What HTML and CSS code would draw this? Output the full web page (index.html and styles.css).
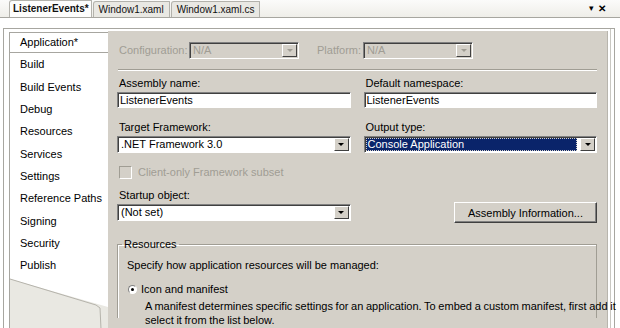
FILE: index.html
```html
<!DOCTYPE html>
<html lang="en">
<head>
<meta charset="UTF-8" />
<title>ListenerEvents - Project Properties</title>
<link rel="stylesheet" href="styles.css">
</head>
<body>

<!-- document tabs -->
<div class="tabstrip">
  <div class="tab active">ListenerEvents*</div>
  <div class="tab">Window1.xaml</div>
  <div class="tab">Window1.xaml.cs</div>
  <div class="tab-tools"><span class="tool-arrow">&#9662;</span><span class="tool-close">&#10005;</span></div>
</div>

<div class="frame">
  <!-- property page list -->
  <div class="sidebar">
    <ul class="page-list">
      <li class="current">Application*</li>
      <li>Build</li>
      <li>Build Events</li>
      <li>Debug</li>
      <li>Resources</li>
      <li>Services</li>
      <li>Settings</li>
      <li>Reference Paths</li>
      <li>Signing</li>
      <li>Security</li>
      <li>Publish</li>
    </ul>
    <svg class="side-tail" width="98" height="52" viewBox="0 0 98 52">
      <polygon points="0,0 98,0 98,30 0,2" fill="#fff" />
      <polyline points="0,2 86,28 90,31 91,52" fill="none" stroke="#b5b3ab" stroke-width="1" />
    </svg>
  </div>

  <!-- application page -->
  <div class="panel">
    <div class="config-row">
      <span class="dim-label cfg-label">Configuration:</span>
      <div class="combo disabled cfg"><span class="combo-text">N/A</span><span class="combo-btn"><i class="tri"></i></span></div>
      <span class="dim-label plat">Platform:</span>
      <div class="combo disabled cfg"><span class="combo-text">N/A</span><span class="combo-btn"><i class="tri"></i></span></div>
    </div>
    <div class="etched"></div>

    <div class="fields">
      <div class="field">
        <label>Assembly name:</label>
        <div class="textbox">ListenerEvents</div>
      </div>
      <div class="field">
        <label>Default namespace:</label>
        <div class="textbox">ListenerEvents</div>
      </div>

      <div class="field">
        <label>Target Framework:</label>
        <div class="combo"><span class="combo-text">.NET Framework 3.0</span><span class="combo-btn"><i class="tri"></i></span></div>
      </div>
      <div class="field">
        <label>Output type:</label>
        <div class="combo focused"><span class="combo-text">Console Application</span><span class="combo-btn"><i class="tri"></i></span></div>
      </div>
    </div>

    <div class="check-row">
      <span class="checkbox"></span>
      <span class="dim-label">Client-only Framework subset</span>
    </div>

    <div class="fields startup">
      <div class="field">
        <label>Startup object:</label>
        <div class="combo"><span class="combo-text">(Not set)</span><span class="combo-btn"><i class="tri"></i></span></div>
      </div>
      <div class="field btn-cell">
        <button class="win-btn">Assembly Information...</button>
      </div>
    </div>

    <fieldset class="group">
      <legend>Resources</legend>
      <p class="hint">Specify how application resources will be managed:</p>
      <div class="radio-row">
        <span class="radio on"></span>
        <span>Icon and manifest</span>
      </div>
      <p class="desc">A manifest determines specific settings for an application. To embed a custom manifest, first add it<br>select it from the list below.</p>
    </fieldset>
  </div>
</div>

</body>
</html>
```

FILE: styles.css
```css
body { margin: 0; width: 620px; height: 328px; overflow: hidden; background: #fff; font-family: "Liberation Sans", Arial, sans-serif; font-size: 11px; color: #000; }

/* tabs */
.tabstrip { height: 17px; display: flex; align-items: flex-end; padding-left: 9px; background: linear-gradient(#fbfbfa, #efeee9); border-bottom: 1px solid #a7a6a0; }
.tab { height: 15px; line-height: 15px; padding: 0 5px; margin-right: 1px; background: #e9e8e3; border: 1px solid #b3b2ac; border-bottom: none; border-radius: 3px 1px 0 0; color: #111; font-size: 10px; }
.tab.active { background: #fdfdfc; font-weight: bold; height: 16px; padding: 0 2px 0 3px; }
.tab-tools { margin-left: auto; margin-right: 14px; align-self: center; display: flex; gap: 4px; font-size: 10px; }
.tool-arrow { font-size: 9px; }
.tool-close { font-weight: bold; }

/* outer frame */
.frame { display: flex; height: 298px; margin: 10px 5px 0 3px; border: 1px solid #a7a6a0; border-bottom: none; padding: 2px 6px 0 5px; box-shadow: inset -3px 0 0 #fff, inset -4px 0 0 #c9c8c2; }

.sidebar { width: 98px; flex: none; display: flex; flex-direction: column; background: #e9e8e2; border-left: 1px solid #a7a6a0; margin-top: 1px; overflow: hidden; }
.page-list { list-style: none; margin: 0; padding: 0; background: #fff; }
.page-list li { height: 22.33px; line-height: 22px; padding-left: 10px; white-space: nowrap; }
.page-list li.current { height: 19px; line-height: 19px; border: 1px solid #a7a6a0; border-right: none; border-left: none; margin-bottom: 0.33px; }
.side-tail { display: block; flex: none; }

/* main page */
.panel { flex: 1; min-width: 0; background: #d4d0c8; padding: 11px 10px 0 9px; border-right: 1px solid #b8b5ad; }

.config-row { display: flex; align-items: center; height: 16px; }
.dim-label { color: #a09d94; padding-left: 2px; white-space: nowrap; }
.cfg-label { width: 70px; flex: none; }
.cfg { width: 107px; flex: none; }
.plat { margin-left: 16px; width: 46px; flex: none; }

.etched { height: 1px; background: #a09d94; border-bottom: 1px solid #fff; margin: 11px 0 5px 1px; }

.fields { display: grid; grid-template-columns: 1fr 1fr; column-gap: 13px; row-gap: 12px; }
.field { min-width: 0; }
.field label { display: block; height: 14px; line-height: 14px; padding-left: 2px; margin-bottom: 2px; }

.textbox { height: 12px; line-height: 12px; padding: 1px 2px; background: #fff; border: 1px solid; border-color: #808080 #fff #fff #808080; box-shadow: inset 1px 1px #404040; white-space: nowrap; }

.combo { display: flex; height: 14px; background: #fff; border: 1px solid; border-color: #808080 #fff #fff #808080; box-shadow: inset 1px 1px #404040; padding: 1px 0 0 1px; }
.combo-text { flex: 1; line-height: 13px; padding-left: 2px; white-space: nowrap; overflow: hidden; }
.combo-btn { width: 13px; height: 11px; margin: 0 1px 1px 0; background: #d4d0c8; border: 1px solid; border-color: #fff #404040 #404040 #fff; display: flex; align-items: center; justify-content: center; }
.tri { width: 0; height: 0; border-left: 3px solid transparent; border-right: 3px solid transparent; border-top: 3px solid #000; }
.combo.disabled { background: #d4d0c8; }
.combo.disabled .combo-text { color: #a09d94; }
.combo.disabled .tri { border-top-color: #a09d94; }
.combo.focused .combo-text { background: #0a246a; color: #fff; outline: 1px dotted #d4d0c8; outline-offset: -1px; margin: 0 3px 1px 0; }

.check-row { display: flex; align-items: center; gap: 4px; height: 14px; margin: 12px 0 9px 2px; }
.checkbox { width: 11px; height: 11px; background: #d4d0c8; border: 1px solid; border-color: #a09d94 #fff #fff #a09d94; }

.startup { row-gap: 0; }
.btn-cell { display: flex; justify-content: flex-end; padding-top: 14px; }
.win-btn { width: 143px; height: 21px; padding: 0; font: inherit; color: #000; background: #d4d0c8; border: 1px solid; border-color: #fff #404040 #404040 #fff; box-shadow: inset -1px -1px #808080; }

.group { margin: 14px 0 0 0; padding: 0 0 0 9px; border: 1px solid #a09d94; border-bottom: none; box-shadow: inset 1px 1px #fff; height: 80px; min-width: 0; }
.group legend { padding: 0 2px; margin-left: -5px; line-height: 14px; }
.hint { margin: 7px 0 0 0; line-height: 14px; white-space: nowrap; }
.radio-row { display: flex; align-items: center; gap: 4px; margin: 10px 0 0 1px; height: 14px; }
.radio { width: 7px; height: 7px; border-radius: 50%; background: #fff; border: 1px solid; border-color: #808080 #fff #fff #808080; display: flex; align-items: center; justify-content: center; }
.radio.on::after { content: ""; width: 3px; height: 3px; border-radius: 50%; background: #000; }
.desc { margin: 3px 0 0 18px; line-height: 14px; white-space: nowrap; word-spacing: -0.4px; }
```
